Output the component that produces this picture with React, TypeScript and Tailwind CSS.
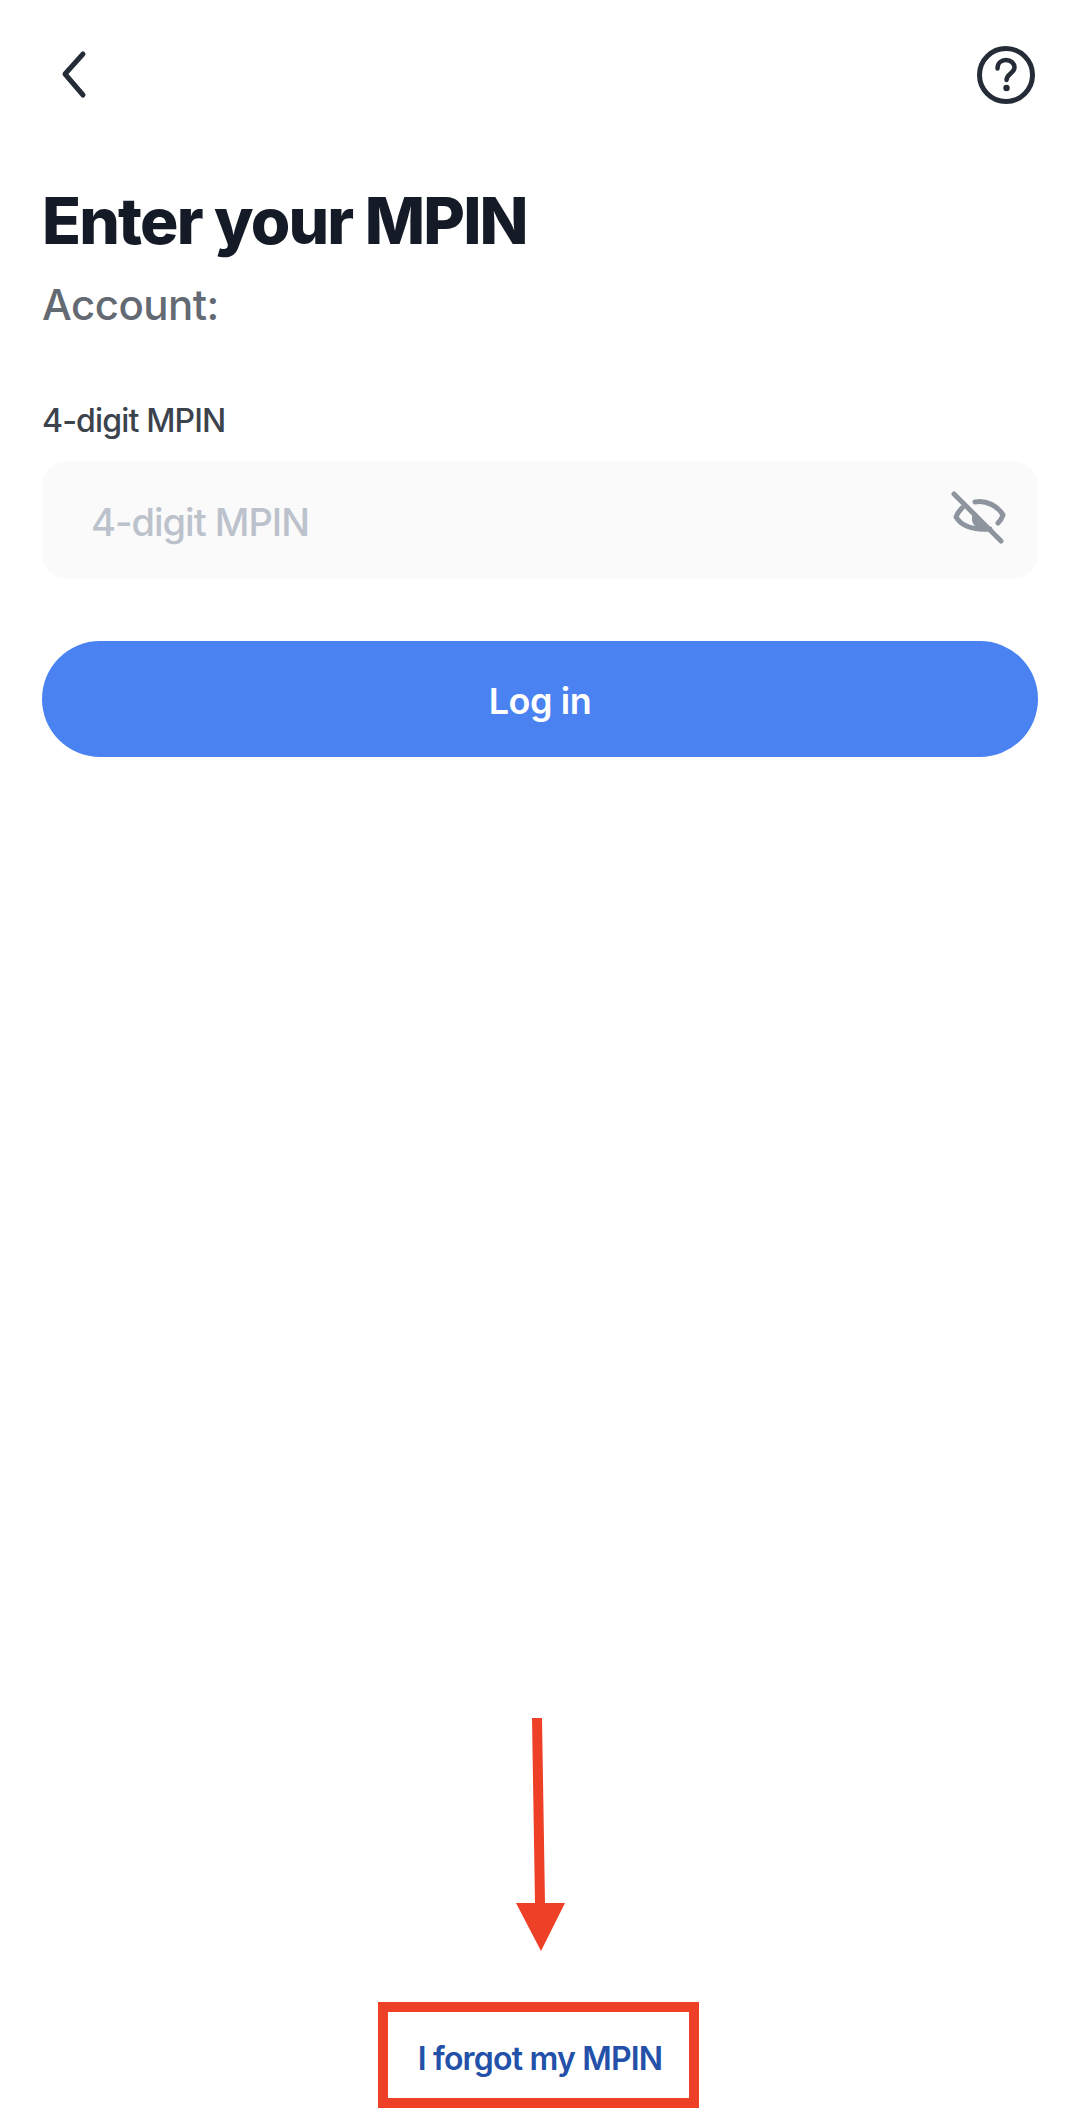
export default function App() {
	return (
		<div className="relative flex h-[2126px] w-[1080px] flex-col bg-white px-[42px] font-['Inter',sans-serif]">
			{/* Top bar */}
			<div className="flex h-[58px] mt-[46px] items-center justify-between">
				<svg width="30" height="50" viewBox="0 0 30 50" fill="none" className="ml-[17px] mb-[3px]">
					<path d="M24 5 L6 25 L24 46" stroke="#252b37" strokeWidth="5" strokeLinecap="round" strokeLinejoin="round" />
				</svg>
				<svg width="60" height="60" viewBox="0 0 60 60" fill="none" className="mr-[2px]">
					<circle cx="30" cy="30" r="26.5" stroke="#252b37" strokeWidth="5" />
					<path d="M21.5 23.5 C21.5 18 25.5 15 30 15 C35 15 38.5 18.5 38.5 22.5 C38.5 28 31 28.5 30.5 35" stroke="#252b37" strokeWidth="4.5" strokeLinecap="round" />
					<circle cx="30.5" cy="43" r="3.2" fill="#252b37" />
				</svg>
			</div>

			<h1 className="mt-[79px] text-[64px] leading-[76px] font-extrabold tracking-[-1.8px] text-[#141a26]">Enter your MPIN</h1>
			<p className="mt-[21px] text-[42px] leading-[50px] font-medium tracking-[-0.5px] text-[#646a73]">Account:</p>

			<label className="mt-[71px] text-[32px] leading-[40px] font-medium tracking-[-0.85px] text-[#3c434d]">4-digit MPIN</label>

			<div className="mt-[21px] flex h-[116px] items-center justify-between rounded-[24px] bg-[#fafafb] pl-[49px] pr-[30px]">
				<span className="mt-[4px] text-[38px] font-medium tracking-[-1px] text-[#bcc2cc]">4-digit MPIN</span>
				<svg width="60" height="60" viewBox="0 0 60 60" fill="none" className="mb-[4px]">
					<g stroke="#8e949e" strokeWidth="5" strokeLinecap="round" strokeLinejoin="round">
						<path d="M6 6 L53 53" />
						<path d="M27 14 C38 12 50 18 55 27 C54 30 52 33 50 35" />
						<path d="M14 20 C11 23 9 26 8 29 C14 39 27 42 42 41" />
						<path d="M27 27 C25 33 28 37 33 38" />
					</g>
				</svg>
			</div>

			<button className="mt-[63px] flex h-[116px] w-full items-center justify-center rounded-full bg-[#4a82f2] pt-[3px] text-[36px] font-semibold tracking-[-0.45px] text-white">
				Log in
			</button>

			<a className="mt-auto mb-[45px] self-center text-[32px] leading-[44px] font-semibold tracking-[-0.8px] text-[#2350a8]">I forgot my MPIN</a>

			{/* Red annotation over the page */}
			<svg width="60" height="240" viewBox="0 0 60 240" className="absolute left-[510px] top-[1715px]">
				<path d="M22 3 L32 3 L35 188 L55 188 L31 236 L6 188 L25 188 Z" fill="#ee4026" />
			</svg>
			<div className="absolute left-[378px] top-[2002px] h-[106px] w-[321px] border-[10px] border-[#ee4026]" />
		</div>
	);
}
